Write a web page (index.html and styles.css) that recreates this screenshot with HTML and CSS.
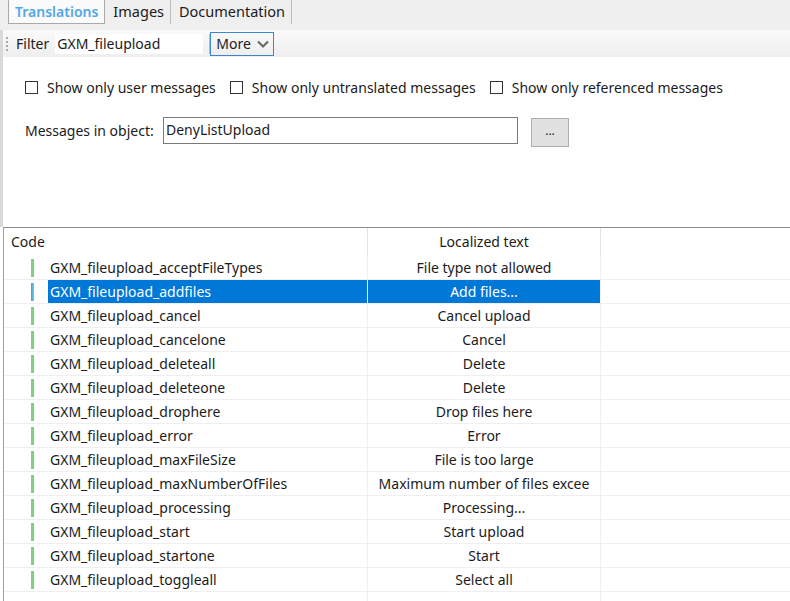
FILE: index.html
```html
<!DOCTYPE html>
<html>
<head>
<meta charset="utf-8">
<link rel="stylesheet" href="styles.css">
</head>
<body>
<div class="tabs">
  <div class="tab active">Translations</div>
  <div class="tab">Images</div>
  <div class="tab">Documentation</div>
</div>
<div class="toolbar">
  <div class="grip"><i></i><i></i><i></i><i></i></div>
  <span class="filter-label">Filter</span>
  <div class="filter-input">GXM_fileupload</div>
  <div class="tsep"></div>
  <div class="more">More
    <svg width="14" height="10" viewBox="0 0 14 10"><path d="M2 2.5 L7 7.5 L12 2.5" fill="none" stroke="#6b6b6b" stroke-width="2.2"/></svg>
  </div>
</div>
<div class="main">
  <div class="checks">
    <label class="chk"><span class="box"></span>Show only user messages</label>
    <label class="chk"><span class="box"></span>Show only untranslated messages</label>
    <label class="chk"><span class="box"></span>Show only referenced messages</label>
  </div>
  <div class="objrow">
    <span class="objlabel">Messages in object:</span>
    <div class="objinput">DenyListUpload</div>
    <div class="dots">...</div>
  </div>
</div>
<div class="grid">
  <div class="hrow">
    <div class="hc code">Code</div>
    <div class="hc loc">Localized text</div>
    <div class="hc rest"></div>
  </div>
  <div class="row"><div class="rh"><span class="bar"></span></div><div class="c1">GXM_fileupload_acceptFileTypes</div><div class="c2">File type not allowed</div><div class="c3"></div></div>
  <div class="row sel"><div class="rh"><span class="bar"></span></div><div class="c1">GXM_fileupload_addfiles</div><div class="c2">Add files...</div><div class="c3"></div></div>
  <div class="row"><div class="rh"><span class="bar"></span></div><div class="c1">GXM_fileupload_cancel</div><div class="c2">Cancel upload</div><div class="c3"></div></div>
  <div class="row"><div class="rh"><span class="bar"></span></div><div class="c1">GXM_fileupload_cancelone</div><div class="c2">Cancel</div><div class="c3"></div></div>
  <div class="row"><div class="rh"><span class="bar"></span></div><div class="c1">GXM_fileupload_deleteall</div><div class="c2">Delete</div><div class="c3"></div></div>
  <div class="row"><div class="rh"><span class="bar"></span></div><div class="c1">GXM_fileupload_deleteone</div><div class="c2">Delete</div><div class="c3"></div></div>
  <div class="row"><div class="rh"><span class="bar"></span></div><div class="c1">GXM_fileupload_drophere</div><div class="c2">Drop files here</div><div class="c3"></div></div>
  <div class="row"><div class="rh"><span class="bar"></span></div><div class="c1">GXM_fileupload_error</div><div class="c2">Error</div><div class="c3"></div></div>
  <div class="row"><div class="rh"><span class="bar"></span></div><div class="c1">GXM_fileupload_maxFileSize</div><div class="c2">File is too large</div><div class="c3"></div></div>
  <div class="row"><div class="rh"><span class="bar"></span></div><div class="c1">GXM_fileupload_maxNumberOfFiles</div><div class="c2">Maximum number of files excee</div><div class="c3"></div></div>
  <div class="row"><div class="rh"><span class="bar"></span></div><div class="c1">GXM_fileupload_processing</div><div class="c2">Processing...</div><div class="c3"></div></div>
  <div class="row"><div class="rh"><span class="bar"></span></div><div class="c1">GXM_fileupload_start</div><div class="c2">Start upload</div><div class="c3"></div></div>
  <div class="row"><div class="rh"><span class="bar"></span></div><div class="c1">GXM_fileupload_startone</div><div class="c2">Start</div><div class="c3"></div></div>
  <div class="row"><div class="rh"><span class="bar"></span></div><div class="c1">GXM_fileupload_toggleall</div><div class="c2">Select all</div><div class="c3"></div></div>
  <div class="row"><div class="rh"></div><div class="c1"></div><div class="c2"></div><div class="c3"></div></div>
</div>
</body>
</html>
```

FILE: styles.css
```css
* { box-sizing: border-box; }
html, body { margin: 0; padding: 0; width: 790px; height: 601px; overflow: hidden; background: #fff; }
body { font-family: "Noto Sans", "Open Sans", sans-serif; font-size: 14px; color: #1b1b1b; }

.tabs { height: 30px; background: #efefef; display: flex; align-items: flex-start; padding-left: 8px; font-size: 14.5px; }
.tab { height: 24px; line-height: 23px; padding: 0 6px; border-right: 1px solid #bdbdbd; margin-left: 2px; }
.tab.active { margin-left: 0; border: 1px solid #a9a9a9; border-top: none; background: #fbfbfb; color: #53a6e6; font-weight: 600; padding: 0 6px; font-size: 14px; }

.toolbar { height: 27px; background: linear-gradient(#fafafa, #eeeeee); display: flex; align-items: center; border-left: 3px solid #d9d9d9; }
.grip { width: 10px; display: flex; flex-direction: column; gap: 2px; padding-left: 3px; margin-right: 3px; }
.grip i { display: block; width: 2px; height: 2px; background: #a8a8a8; }
.filter-label { margin-right: 6px; }
.filter-input { background: #fff; width: 148px; height: 20px; line-height: 20px; padding-left: 2px; }
.tsep { width: 1px; height: 20px; background: #bcbcbc; margin: 0 0 0 6px; }
.more { height: 24px; width: 64px; border: 1px solid #3b86d3; display: flex; align-items: center; gap: 5px; padding-left: 5px; }

.main { height: 170px; border-left: 3px solid #d9d9d9; padding: 23px 0 0 22px; }
.checks { display: flex; gap: 14px; height: 14px; align-items: center; }
.chk { display: flex; align-items: center; }
.box { width: 13px; height: 13px; border: 1px solid #333; margin-right: 9px; }
.objrow { display: flex; align-items: flex-start; margin-top: 23px; }
.objlabel { width: 138px; line-height: 27px; }
.objinput { width: 355px; height: 27px; border: 1px solid #7a7a7a; line-height: 24px; padding-left: 2px; }
.dots { width: 38px; height: 29px; margin-left: 13px; margin-top: 1px; background: #e1e1e1; border: 1px solid #adadad; text-align: center; line-height: 24px; font-size: 12px; }

.grid { margin-left: 3px; border-top: 1px solid #8c8c8c; border-left: 1px solid #a0a0a0; height: 374px; }
.hrow { display: grid; grid-template-columns: 364px 233px 1fr; height: 28px; }
.hc { line-height: 28px; }
.hc.code { padding-left: 7px; border-right: 1px solid #e3e3e3; }
.hc.loc { text-align: center; border-right: 1px solid #e3e3e3; }
.row { display: grid; grid-template-columns: 44px 320px 233px 1fr; height: 24px; border-bottom: 1px solid #efefef; line-height: 23px; }
.rh { position: relative; }
.bar { position: absolute; left: 27px; top: 3px; width: 3px; height: 18px; background: #7fcf7f; }
.c1 { padding-left: 2px; border-right: 1px solid #efefef; white-space: nowrap; overflow: hidden; }
.c2 { text-align: center; border-right: 1px solid #efefef; white-space: nowrap; overflow: hidden; }
.row.sel .c1, .row.sel .c2 { background: #0078d7; color: #fff; }
.row.sel .c1 { border-right-color: #e6f0fa; }
.row.sel .bar { background: linear-gradient(90deg, #3aa0d8, #7fc8e0); }
```
